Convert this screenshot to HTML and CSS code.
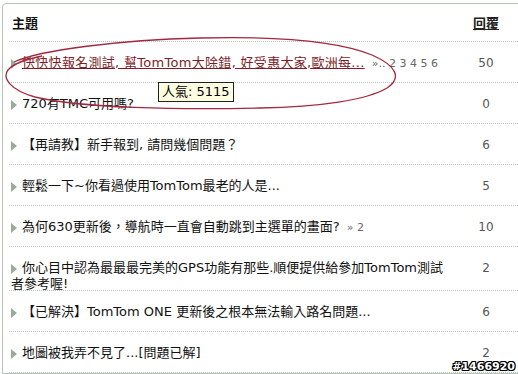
FILE: index.html
```html
<!DOCTYPE html>
<html>
<head>
    <meta charset="utf-8">
    <title>TomTom 討論區</title>
    <link rel="stylesheet" href="styles.css">
</head>
<body>
    <div class="forum">
        <div class="forum-head">
            <div class="col-title">主題</div>
            <div class="col-replies"><a href="#">回覆</a></div>
        </div>

        <ul class="topics">
            <li class="topic">
                <div class="title"><span class="bullet"></span><a href="#" class="hot">快快快報名測試, 幫TomTom大除錯, 好受惠大家,歐洲每...</a> <span class="pages">».. 2 3 4 5 6</span></div>
                <div class="replies">50</div>
            </li>
            <li class="topic">
                <div class="title"><span class="bullet"></span>720有TMC可用嗎?</div>
                <div class="replies">0</div>
            </li>
            <li class="topic">
                <div class="title"><span class="bullet"></span>【再請教】新手報到, 請問幾個問題？</div>
                <div class="replies">6</div>
            </li>
            <li class="topic">
                <div class="title"><span class="bullet"></span>輕鬆一下~你看過使用TomTom最老的人是...</div>
                <div class="replies">5</div>
            </li>
            <li class="topic">
                <div class="title"><span class="bullet"></span>為何630更新後，導航時一直會自動跳到主選單的畫面? <span class="pages">» 2</span></div>
                <div class="replies">10</div>
            </li>
            <li class="topic two-line">
                <div class="title"><span class="bullet"></span>你心目中認為最最最完美的GPS功能有那些.順便提供給參加TomTom測試者參考喔!</div>
                <div class="replies">2</div>
            </li>
            <li class="topic">
                <div class="title"><span class="bullet"></span>【已解決】TomTom ONE 更新後之根本無法輸入路名問題...</div>
                <div class="replies">6</div>
            </li>
            <li class="topic">
                <div class="title"><span class="bullet"></span>地圖被我弄不見了...[問題已解]</div>
                <div class="replies">2</div>
            </li>
        </ul>
    </div>

    <!-- hand drawn circle around the first topic -->
    <svg class="circle-mark" width="518" height="374" viewBox="0 0 518 374">
        <path d="M14,62 C40,50 120,40 200,38 C280,36 340,42 372,55 C397,66 402,78 387,88 C367,100 320,107 260,108 C180,110 80,108 35,97 C10,90 2,78 8,70 C12,65 22,60 42,56" fill="none" stroke="#a3283f" stroke-width="1.3"/>
    </svg>

    <div class="tooltip">人氣: 5115</div>

    <div class="watermark">#1466920</div>
</body>
</html>
```

FILE: styles.css
```css
html,
body {
    margin: 0;
    padding: 0;
    overflow: hidden;
    background-color: #ffffff;
}

body {
    position: relative;
    width: 518px;
    height: 374px;
    font-family: "DejaVu Sans", "Noto Sans CJK TC", sans-serif;
    font-size: 13px;
    color: #111;
}

.forum {
    width: 513px;
    margin: 3px 0 0 2px;
    padding-left: 6px;
    border: 1px solid #b3c5b3;
    border-top-left-radius: 4px;
}

.forum-head {
    display: grid;
    grid-template-columns: 441px 72px;
    padding: 12px 0 9px;
    line-height: 16px;
    font-weight: bold;
    border-bottom: 1px dotted #b9c6bd;
}

.forum-head .col-title {
    padding-left: 3px;
}

.forum-head .col-replies {
    text-align: center;
}

.forum-head .col-replies a {
    color: #222;
    text-decoration: underline;
}

.topics {
    list-style: none;
    margin: 0;
    padding: 0;
}

.topic {
    display: grid;
    grid-template-columns: 441px 72px;
    height: 41px;
    box-sizing: border-box;
    padding-top: 13px;
    line-height: 16px;
    border-bottom: 1px dotted #b9c6bd;
}

.topic.two-line {
    height: 44px;
}

.title {
    padding-left: 2px;
}

.bullet {
    display: inline-block;
    width: 0;
    height: 0;
    margin-right: 5px;
    border-top: 5px solid transparent;
    border-bottom: 5px solid transparent;
    border-left: 6px solid #9aab9a;
    vertical-align: -2px;
}

.title a.hot {
    color: #7c1d28;
    text-decoration: underline;
    letter-spacing: 0.3px;
}

.pages {
    font-size: 11px;
    color: #666;
    padding-left: 3px;
}

.replies {
    font-size: 12px;
    color: #555;
    text-align: center;
}

.circle-mark {
    position: absolute;
    top: 0;
    left: 0;
    pointer-events: none;
}

.tooltip {
    position: absolute;
    top: 82px;
    left: 158px;
    padding: 0 3px;
    line-height: 18px;
    background-color: #ffffe1;
    border: 1px solid #222;
    color: #000;
}

.watermark {
    position: absolute;
    top: 361px;
    right: 3px;
    font-size: 11px;
    line-height: 12px;
    font-weight: bold;
    color: #fff;
    text-shadow: 1px 0 0 #000, -1px 0 0 #000, 0 1px 0 #000, 0 -1px 0 #000,
        1px 1px 0 #000, -1px -1px 0 #000, 1px -1px 0 #000, -1px 1px 0 #000;
}
```
